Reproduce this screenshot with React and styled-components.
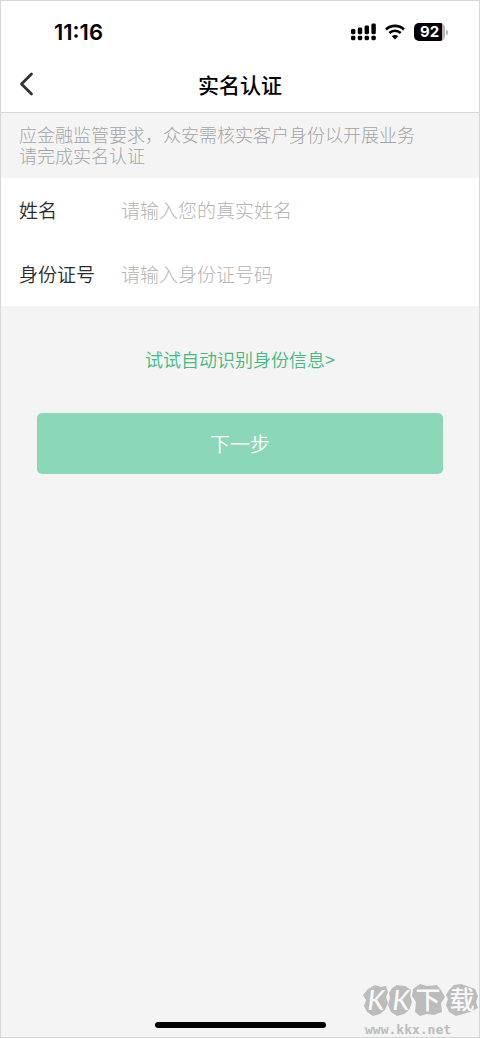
import React from 'react';
import styled, { createGlobalStyle } from 'styled-components';

const GlobalStyle = createGlobalStyle`
  *, *::before, *::after { box-sizing: border-box; }
  body {
    margin: 0;
    background: #f4f4f4;
    font-family: "Noto Sans CJK SC", sans-serif;
  }
`;

const Page = styled.div`
  position: relative;
  display: flex;
  flex-direction: column;
  min-height: 100vh;
  border: 1px solid #d6d6d6;
  background: #f4f4f4;
`;

const StatusBar = styled.div`
  display: flex;
  align-items: center;
  justify-content: space-between;
  height: 55px;
  padding: 7px 31px 0 53px;
  background: #fff;
  font-family: "Inter", sans-serif;
`;

const Clock = styled.time`
  font-size: 22px;
  line-height: 24px;
  font-weight: 600;
  color: #000;
`;

const StatusIcons = styled.div`
  display: flex;
  align-items: center;
  gap: 9px;
  svg { display: block; }
`;

const BatteryWrap = styled.div`
  display: flex;
  align-items: center;
  gap: 1px;
`;

const Battery = styled.span`
  width: 31px;
  height: 18px;
  border-radius: 5px;
  background: linear-gradient(to right, #000 28px, #b4b4b4 28px);
  color: #fff;
  font-size: 15px;
  line-height: 18px;
  font-weight: 700;
  text-align: center;
`;

const BatteryTip = styled.span`
  width: 2px;
  height: 5px;
  border-radius: 0 2px 2px 0;
  background: #b4b4b4;
`;

const NavBar = styled.header`
  display: grid;
  grid-template-columns: 56px 1fr 56px;
  align-items: center;
  height: 57px;
  border-bottom: 1px solid #d6d6d6;
  background: #fff;
`;

const BackButton = styled.button`
  display: flex;
  padding: 0 0 0 18px;
  border: 0;
  background: none;
`;

const Title = styled.h1`
  margin: 0;
  font-size: 21px;
  line-height: 28px;
  font-weight: 500;
  text-align: center;
  color: #000;
`;

const Notice = styled.p`
  margin: 0;
  padding: 11px 18px 12px;
  font-size: 18px;
  line-height: 21px;
  font-weight: 300;
  color: #a4a4a4;
`;

const Form = styled.form`
  display: flex;
  flex-direction: column;
`;

const Field = styled.div`
  display: flex;
  align-items: center;
  height: 64px;
  padding: 0 18px;
  background: #fff;
`;

const Label = styled.label`
  flex: 0 0 102px;
  font-size: 19px;
  line-height: 28px;
  font-weight: 350;
  color: #2c2c2c;
`;

const Input = styled.input`
  flex: 1;
  min-width: 0;
  padding: 0;
  border: 0;
  outline: 0;
  background: none;
  font-family: inherit;
  font-size: 19px;
  line-height: 28px;
  color: #2c2c2c;
  &::placeholder { color: #b4b4b4; font-weight: 300; opacity: 1; }
`;

const ScanLink = styled.a`
  align-self: center;
  margin-top: 41px;
  font-size: 18px;
  line-height: 24px;
  font-weight: 350;
  color: #44b981;
  text-decoration: none;
`;

const NextButton = styled.button`
  height: 61px;
  margin: 42px 36px 0;
  padding: 0;
  border: 0;
  border-radius: 5px;
  background: #8ad8b8;
  font-family: inherit;
  font-size: 20px;
  font-weight: 350;
  color: #fff;
`;

const HomeIndicator = styled.div`
  align-self: center;
  width: 171px;
  height: 6px;
  margin: auto 0 9px;
  border-radius: 3px;
  background: #000;
`;

const Watermark = styled.svg`
  position: absolute;
  right: 0;
  bottom: 0;
`;

const SignalIcon = () => (
  <svg width="25" height="18" viewBox="0 0 25 18" aria-hidden="true">
    <rect x="0" y="6" width="4.4" height="5.2" rx="1.4" />
    <rect x="6.8" y="4.6" width="4.4" height="6.6" rx="1.4" />
    <rect x="13.6" y="2.6" width="4.4" height="8.6" rx="1.4" />
    <rect x="20.4" y="0.6" width="4.4" height="10.6" rx="1.4" />
    {[0, 6.8, 13.6, 20.4].map((x) => (
      <rect key={x} x={x} y="12.8" width="4.4" height="4.4" rx="1.4" />
    ))}
  </svg>
);

const WifiIcon = () => (
  <svg width="20" height="16" viewBox="0 0 20 16" fill="none" stroke="#000" aria-hidden="true">
    <path d="M1 5.5 C6 .6 14 .6 19 5.5" strokeWidth="2.6" />
    <path d="M4.3 9 C7.6 5.9 12.4 5.9 15.7 9" strokeWidth="2.6" />
    <path d="M10 15.4 L6.8 12.2 C8.6 10.6 11.4 10.6 13.2 12.2 Z" fill="#000" stroke="none" />
  </svg>
);

const BackIcon = () => (
  <svg width="16" height="24" viewBox="0 0 16 24" fill="none" stroke="#333" strokeWidth="2.8" strokeLinecap="round" strokeLinejoin="round" aria-hidden="true">
    <path d="M12.5 2 L2.5 12 L12.5 22" />
  </svg>
);

const SiteMark = () => (
  <Watermark width="116" height="72" viewBox="0 -18 116 72" aria-label="KK下载 www.kkx.net">
    <g fill="#bcbcbc">
      <path d="M5 6 L12 2 L18 4 L23 3 L25 9 L23 14 L25 20 L22 27 L17 31 L10 33 L4 29 L1 23 L3 17 L0 12 Z" />
      <path d="M29 5 L34 2 L42 3 L48 7 L47 13 L49 19 L46 27 L41 31 L34 33 L28 29 L25 22 L27 15 L26 10 Z" />
      <path d="M50 6 L57 1 L64 3 L74 2 L78 7 L82 14 L78 20 L79 29 L71 32 L64 31 L57 33 L52 29 L53 19 L49 13 Z" />
      <path d="M86 7 L91 2 L98 1 L104 3 L112 6 L115 13 L113 19 L115 25 L107 29 L100 31 L93 33 L86 29 L83 22 L85 16 L83 12 Z" />
    </g>
    <g fill="#f8f8f8" fontFamily='"Lato", "Noto Sans CJK SC", sans-serif' fontWeight="500" textAnchor="middle">
      <text x="13" y="27" fontSize="27" fontStyle="italic">K</text>
      <text x="38" y="27" fontSize="27" fontStyle="italic">K</text>
      <text x="65" y="26" fontSize="25">下</text>
      <text x="99" y="26" fontSize="25">载</text>
    </g>
    <text x="2" y="51" fontSize="13" fontWeight="700" fontFamily='"DejaVu Sans Mono", monospace' fill="#bcbcbc">www.kkx.net</text>
  </Watermark>
);

export default function App() {
  return (
    <>
      <GlobalStyle />
      <Page>
        <StatusBar>
          <Clock>11:16</Clock>
          <StatusIcons>
            <SignalIcon />
            <WifiIcon />
            <BatteryWrap>
              <Battery>92</Battery>
              <BatteryTip />
            </BatteryWrap>
          </StatusIcons>
        </StatusBar>
        <NavBar>
          <BackButton type="button" aria-label="返回">
            <BackIcon />
          </BackButton>
          <Title>实名认证</Title>
        </NavBar>
        <Notice>
          应金融监管要求{'\uff0c'}众安需核实客户身份以开展业务
          <br />
          请完成实名认证
        </Notice>
        <Form>
          <Field>
            <Label htmlFor="name">姓名</Label>
            <Input id="name" type="text" placeholder="请输入您的真实姓名" />
          </Field>
          <Field>
            <Label htmlFor="id-number">身份证号</Label>
            <Input id="id-number" type="text" placeholder="请输入身份证号码" />
          </Field>
          <ScanLink href="#scan">试试自动识别身份信息&gt;</ScanLink>
          <NextButton type="button">下一步</NextButton>
        </Form>
        <HomeIndicator />
        <SiteMark />
      </Page>
    </>
  );
}
